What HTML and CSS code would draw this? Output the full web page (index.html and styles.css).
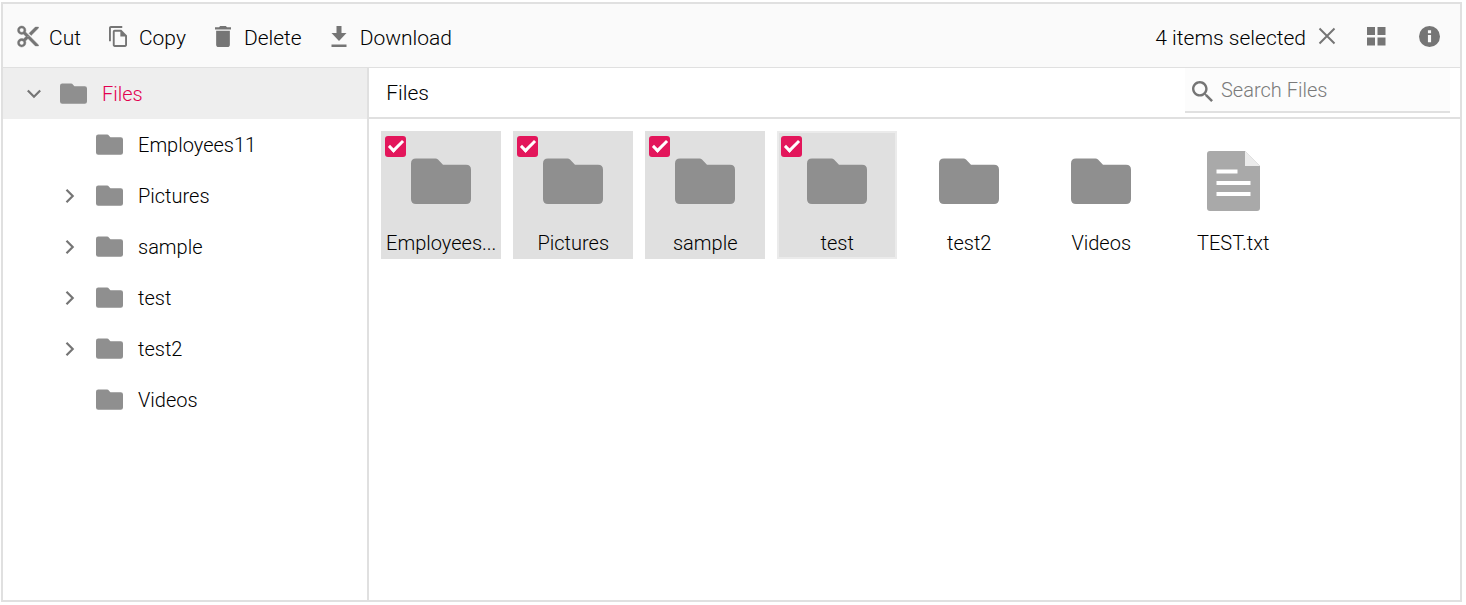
FILE: index.html
```html
<!DOCTYPE html>
<html lang="en">
<head>
<meta charset="utf-8">
<title>File Manager</title>
<meta name="viewport" content="width=device-width, initial-scale=1">
<link rel="stylesheet" href="styles.css">
</head>
<body>
<svg class="sprite" aria-hidden="true">
  <symbol id="folder" viewBox="0 0 60 46"><path d="M5 .5h19.500q1.500 0 2.500 1l5 5.200h23q5 0 5 5v29.300q0 5-5 5h-50q-5 0-5-5v-35.500q0-5 5-5z"/></symbol>
  <symbol id="file" viewBox="0 0 53 60">
    <path class="file-page" d="M3 0h35l15 15v42q0 3-3 3H3q-3 0-3-3V3q0-3 3-3z"/>
    <path class="file-fold" d="M38 0l15 15H38z"/>
    <path class="file-line" d="M9.500 18.500h21v4h-21zM9.500 30h34v4h-34zM9.500 41h34v4h-34z"/>
  </symbol>
  <symbol id="chevron" viewBox="0 0 16 16"><path class="stroke" stroke-width="2.200" d="M4.500 1.800l6.200 6.200-6.200 6.200"/></symbol>
</svg>
<div class="filemanager">
  <div class="toolbar" role="toolbar" aria-label="File actions">
    <div class="toolbar-group">
      <button type="button" class="tool"><span class="tool-icon"><svg class="icon-cut" width="22" height="21" viewBox="2 2 20 20"><path d="M9.640 7.640c.23-.5.36-1.050.36-1.640 0-2.210-1.790-4-4-4S2 3.790 2 6s1.790 4 4 4c.59 0 1.140-.13 1.640-.36L10 12l-2.360 2.360C7.140 14.130 6.590 14 6 14c-2.210 0-4 1.790-4 4s1.790 4 4 4 4-1.790 4-4c0-.59-.13-1.140-.36-1.640L12 14l7 7h3v-1L9.640 7.640zM6 8c-1.100 0-2-.89-2-2s.9-2 2-2 2 .89 2 2-.9 2-2 2zm0 12c-1.100 0-2-.89-2-2s.9-2 2-2 2 .89 2 2-.9 2-2 2zm6-7.500c-.28 0-.5-.22-.5-.5s.22-.5.5-.5.5.22.5.5-.22.5-.5.5zM19 3l-6 6 2 2 7-7V3z"/></svg></span>Cut</button>
      <button type="button" class="tool"><span class="tool-icon"><svg width="18" height="21" viewBox="2 1 19 22"><path d="M16 1H4c-1.100 0-2 .9-2 2v14h2V3h12V1zM15 5H8C6.900 5 6 5.900 6 7v14c0 1.100.9 2 2 2h11c1.100 0 2-.9 2-2V11l-6-6zm4 16H8V7h6v5h5v9z"/></svg></span>Copy</button>
      <button type="button" class="tool"><span class="tool-icon"><svg width="16" height="21" viewBox="5 3 14 18" preserveAspectRatio="none"><path d="M6 19c0 1.100.9 2 2 2h8c1.100 0 2-.9 2-2V7H6v12zM19 4h-3.500l-1-1h-5l-1 1H5v2h14V4z"/></svg></span>Delete</button>
      <button type="button" class="tool"><span class="tool-icon"><svg width="16" height="21" viewBox="0 0 16 21"><path d="M5.500 0h5v7h5L8 15 .5 7h5zM.5 18.500h15V21H.5z"/></svg></span>Download</button>
    </div>
    <div class="toolbar-group toolbar-status">
      <button type="button" class="tool" aria-label="4 items selected, clear selection">4 items selected<span class="tool-icon"><svg width="18" height="18" viewBox="0 0 18 18"><path class="stroke" stroke-width="2" d="M1.500 1.500l15 15M16.500 1.500l-15 15"/></svg></span></button>
      <button type="button" class="tool" aria-label="View"><span class="tool-icon"><svg width="20" height="20" viewBox="0 0 20 20"><path d="M1 1h8v8H1zM11.500 1h8v8h-8zM1 11.500h8v8H1zM11.500 11.500h8v8h-8z"/></svg></span></button>
      <button type="button" class="tool tool-details" aria-label="Details"><span class="tool-icon"><svg width="21" height="21" viewBox="2 2 20 20"><path d="M12 2a10 10 0 1 0 0 20 10 10 0 0 0 0-20zm1.500 15.500h-3v-7h3zm0-8.500h-3V6h3z"/></svg></span></button>
    </div>
  </div>
  <div class="body">
    <nav class="sidebar" aria-label="Folders">
      <ul class="tree">
        <li>
          <a href="#files" class="node node-active"><svg class="chevron chevron-open"><use href="#chevron"/></svg><svg class="node-folder"><use href="#folder"/></svg>Files</a>
          <ul class="tree tree-nested">
            <li><a href="#employees" class="node"><span class="chevron"></span><svg class="node-folder"><use href="#folder"/></svg>Employees11</a></li>
            <li><a href="#pictures" class="node"><svg class="chevron"><use href="#chevron"/></svg><svg class="node-folder"><use href="#folder"/></svg>Pictures</a></li>
            <li><a href="#sample" class="node"><svg class="chevron"><use href="#chevron"/></svg><svg class="node-folder"><use href="#folder"/></svg>sample</a></li>
            <li><a href="#test" class="node"><svg class="chevron"><use href="#chevron"/></svg><svg class="node-folder"><use href="#folder"/></svg>test</a></li>
            <li><a href="#test2" class="node"><svg class="chevron"><use href="#chevron"/></svg><svg class="node-folder"><use href="#folder"/></svg>test2</a></li>
            <li><a href="#videos" class="node"><span class="chevron"></span><svg class="node-folder"><use href="#folder"/></svg>Videos</a></li>
          </ul>
        </li>
      </ul>
    </nav>
    <main class="content">
      <header class="address">
        <a href="#files" class="crumb">Files</a>
        <label class="search">
          <svg width="21" height="21" viewBox="3 3 17.500 17.500"><path d="M15.500 14h-.79l-.28-.27C15.410 12.590 16 11.110 16 9.500 16 5.910 13.090 3 9.500 3S3 5.910 3 9.500 5.910 16 9.500 16c1.610 0 3.090-.59 4.230-1.570l.27.28v.79l5 4.990L20.490 19l-4.990-5zm-6 0C7.010 14 5 11.990 5 9.500S7.010 5 9.500 5 14 7.010 14 9.500 11.990 14 9.500 14z"/></svg>
          <input type="text" class="search-input" placeholder="Search Files" aria-label="Search Files">
        </label>
      </header>
      <div class="items">
        <label class="item"><input type="checkbox" class="check" checked><span class="item-icon"><svg class="item-folder"><use href="#folder"/></svg></span><span class="item-name" title="Employees11">Employees...</span></label>
        <label class="item"><input type="checkbox" class="check" checked><span class="item-icon"><svg class="item-folder"><use href="#folder"/></svg></span><span class="item-name">Pictures</span></label>
        <label class="item"><input type="checkbox" class="check" checked><span class="item-icon"><svg class="item-folder"><use href="#folder"/></svg></span><span class="item-name">sample</span></label>
        <label class="item item-focused"><input type="checkbox" class="check" checked><span class="item-icon"><svg class="item-folder"><use href="#folder"/></svg></span><span class="item-name">test</span></label>
        <label class="item"><input type="checkbox" class="check"><span class="item-icon"><svg class="item-folder"><use href="#folder"/></svg></span><span class="item-name">test2</span></label>
        <label class="item"><input type="checkbox" class="check"><span class="item-icon"><svg class="item-folder"><use href="#folder"/></svg></span><span class="item-name">Videos</span></label>
        <label class="item"><input type="checkbox" class="check"><span class="item-icon"><svg class="item-file"><use href="#file"/></svg></span><span class="item-name">TEST.txt</span></label>
      </div>
    </main>
  </div>
</div>
</body>
</html>
```
FILE: styles.css
```css
*,
*::after {
  box-sizing: border-box;
}

body {
  margin: 0;
  padding: 2px 4px 3px 1px;
  min-height: 100vh;
  display: flex;
  background: #fff;
  color: #000;
  font: 300 20px/24px Roboto, sans-serif;
}

svg {
  display: block;
  flex: none;
  fill: #757575;
}

.sprite {
  position: absolute;
  width: 0;
  height: 0;
}

.stroke {
  fill: none;
  stroke: #757575;
}

.filemanager {
  flex: 1;
  min-width: 0;
  display: flex;
  flex-direction: column;
  border: 2px solid #e0e0e0;
}

.toolbar {
  display: flex;
  justify-content: space-between;
  align-items: center;
  height: 64px;
  padding: 4px 20px 0 14px;
  background: #fafafa;
  border-bottom: 1px solid #e0e0e0;
}

.toolbar-group {
  display: flex;
  align-items: center;
  gap: 26px;
}

.toolbar-status {
  gap: 27px;
}

.tool {
  display: flex;
  align-items: center;
  gap: 10px;
  padding: 0;
  border: 0;
  background: none;
  color: #000;
  font: inherit;
  font-size: 21px;
  white-space: nowrap;
}

.tool-details {
  padding-left: 4px;
}

.tool-icon {
  width: 22px;
  height: 24px;
  display: flex;
  justify-content: center;
  align-items: center;
  padding-bottom: 3px;
}

.icon-cut {
  stroke: #757575;
  stroke-width: 0.4;
  overflow: visible;
}

.body {
  flex: 1;
  display: flex;
}

.sidebar {
  flex: 0 0 calc(25% + 2px);
  border-right: 2px solid #e0e0e0;
}

.tree {
  margin: 0;
  padding: 0;
  list-style: none;
}

.tree-nested .node {
  padding-left: 59px;
}

.node {
  display: flex;
  align-items: center;
  height: 51px;
  padding-left: 23px;
  color: #000;
  text-decoration: none;
}

.node-active {
  background: #eee;
  color: #e3004f;
}

.chevron {
  width: 16px;
  height: 16px;
  margin-right: 18px;
}

.chevron-open {
  transform: rotate(90deg);
}

.node-folder {
  width: 27px;
  height: 21px;
  margin-right: 15px;
  fill: #8f8f8f;
}

.content {
  flex: 1;
  min-width: 0;
}

.address {
  display: flex;
  justify-content: space-between;
  height: 51px;
  padding: 0 10px 0 17px;
  border-bottom: 2px solid #e0e0e0;
}

.crumb {
  align-self: center;
  color: #000;
  font-size: 21px;
  text-decoration: none;
}

.search {
  display: flex;
  align-items: center;
  gap: 8px;
  width: 265px;
  height: 45px;
  padding-left: 7px;
  background: #fcfcfc;
  border-bottom: 2px solid #e0e0e0;
}

.search svg {
  margin-top: 4px;
}

.search-input {
  flex: 1;
  min-width: 0;
  padding: 0;
  border: 0;
  outline: 0;
  background: none;
  color: #000;
  font: inherit;
}

.search-input::placeholder {
  color: #7a7a7a;
}

.items {
  display: flex;
  flex-wrap: wrap;
  gap: 12px;
  padding: 12px;
}

.item {
  position: relative;
  width: 120px;
  height: 128px;
  padding: 20px 4px 4px;
}

.item:has(.check:checked) {
  background: #e0e0e0;
}

.item-focused {
  box-shadow: inset 0 0 0 2px #ebebeb;
}

.check {
  position: absolute;
  top: 5px;
  left: 4px;
  width: 21px;
  height: 21px;
  margin: 0;
  appearance: none;
  border-radius: 3px;
  opacity: 0;
}

.check:checked {
  opacity: 1;
  background: #e3165b;
}

.check:checked::after {
  content: "";
  position: absolute;
  top: 1px;
  left: 7px;
  width: 8px;
  height: 15px;
  border: solid #fff;
  border-width: 0 3px 3px 0;
  transform: rotate(45deg);
}

.item-icon {
  display: flex;
  justify-content: center;
  align-items: center;
  height: 60px;
}

.item-folder {
  width: 60px;
  height: 46px;
  fill: #8f8f8f;
}

.item-file {
  width: 53px;
  height: 60px;
}

.file-page {
  fill: #a9a9a9;
}

.file-fold {
  fill: #ebebeb;
}

.file-line {
  fill: #fff;
}

.item-name {
  display: block;
  margin-top: 20px;
  overflow: hidden;
  text-align: center;
  text-overflow: ellipsis;
  white-space: nowrap;
}
```
